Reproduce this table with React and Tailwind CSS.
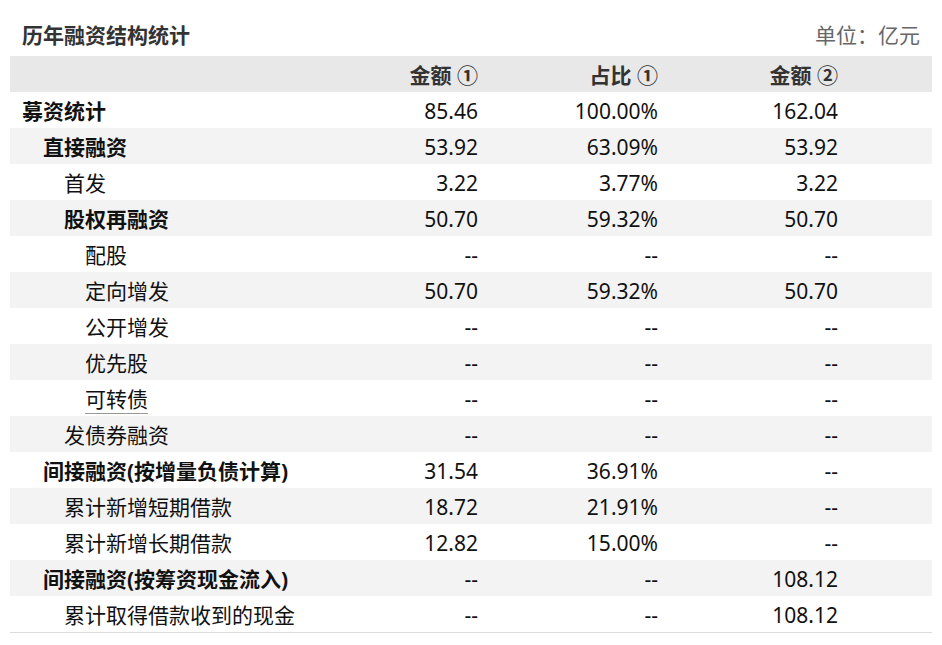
import React from "react";

const rows = [
    { name: "募资统计", level: 0, bold: true, a: "85.46", b: "100.00%", c: "162.04" },
    { name: "直接融资", level: 1, bold: true, a: "53.92", b: "63.09%", c: "53.92" },
    { name: "首发", level: 2, a: "3.22", b: "3.77%", c: "3.22" },
    { name: "股权再融资", level: 2, bold: true, a: "50.70", b: "59.32%", c: "50.70" },
    { name: "配股", level: 3, a: "--", b: "--", c: "--" },
    { name: "定向增发", level: 3, a: "50.70", b: "59.32%", c: "50.70" },
    { name: "公开增发", level: 3, a: "--", b: "--", c: "--" },
    { name: "优先股", level: 3, a: "--", b: "--", c: "--" },
    { name: "可转债", level: 3, underline: true, a: "--", b: "--", c: "--" },
    { name: "发债券融资", level: 2, a: "--", b: "--", c: "--" },
    { name: "间接融资(按增量负债计算)", level: 1, bold: true, a: "31.54", b: "36.91%", c: "--" },
    { name: "累计新增短期借款", level: 2, a: "18.72", b: "21.91%", c: "--" },
    { name: "累计新增长期借款", level: 2, a: "12.82", b: "15.00%", c: "--" },
    { name: "间接融资(按筹资现金流入)", level: 1, bold: true, a: "--", b: "--", c: "108.12" },
    { name: "累计取得借款收到的现金", level: 2, a: "--", b: "--", c: "108.12" },
];

// indent per level, 21px steps
const indent = ["pl-[12px]", "pl-[33px]", "pl-[54px]", "pl-[75px]"];

export default function App() {
    return (
        <div
            className="w-[942px] h-[645px] bg-white px-[10px] text-[21px]"
            style={{ fontFamily: '"Noto Sans", "Noto Sans CJK SC", sans-serif' }}
        >
            {/* Title */}
            <div className="h-[56px] pt-[16px] px-[12px] flex items-center justify-between">
                <h2 className="font-bold text-[#333]">历年融资结构统计</h2>
                <span className="text-[#666]">单位：亿元</span>
            </div>

            {/* Table header */}
            <div className="h-[36px] pt-[4px] flex items-center bg-[#e8e8e8] font-bold text-[#333]">
                <div className="flex-1"></div>
                <div className="w-[180px] text-right">金额 ①</div>
                <div className="w-[180px] text-right">占比 ①</div>
                <div className="w-[180px] text-right">金额 ②</div>
                <div className="w-[94px]"></div>
            </div>

            {/* Rows */}
            <div className="border-b border-[#dcdcdc]">
                {rows.map((row, i) => (
                    <div
                        key={row.name}
                        className={
                            "h-[36px] pt-[4px] flex items-center text-[#111] " +
                            (i % 2 === 1 ? "bg-[#f3f3f3]" : "bg-white")
                        }
                    >
                        <div className={"flex-1 whitespace-nowrap " + indent[row.level]}>
                            <span
                                className={
                                    (row.bold ? "font-bold " : "") +
                                    (row.underline ? "border-b border-[#999]" : "")
                                }
                            >
                                {row.name}
                            </span>
                        </div>
                        <div className="w-[180px] text-right">{row.a}</div>
                        <div className="w-[180px] text-right">{row.b}</div>
                        <div className="w-[180px] text-right">{row.c}</div>
                        <div className="w-[94px]"></div>
                    </div>
                ))}
            </div>
        </div>
    );
}
